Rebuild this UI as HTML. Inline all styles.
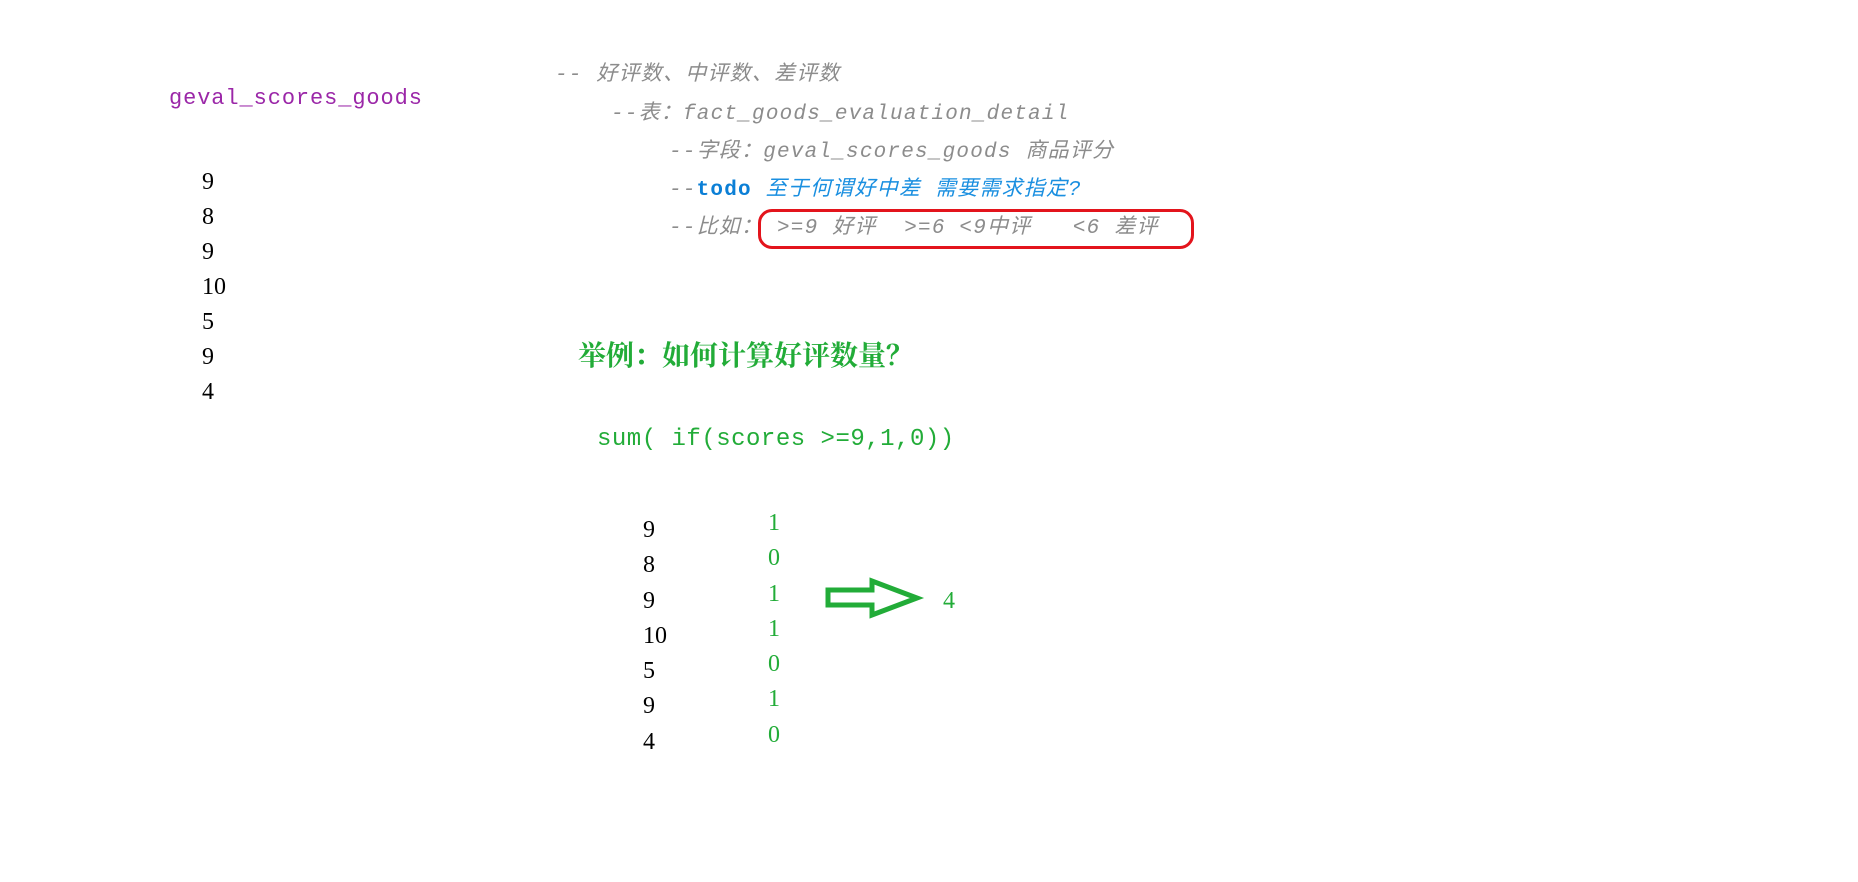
<!DOCTYPE html>
<html><head><meta charset="utf-8"><style>
html,body{margin:0;padding:0;background:#fff;width:1858px;height:882px;overflow:hidden;position:relative}
.t{position:absolute;white-space:pre;line-height:1}
.c{font-family:"Liberation Mono","Noto Sans CJK SC",monospace;font-style:italic;color:#8c8c8c;font-size:21px;letter-spacing:1.2px}
.n{font-family:"Liberation Serif","Noto Serif CJK SC",serif;font-size:24px;color:#000}
.g{color:#22ac38}
</style></head><body>
<div class="t" style="left:169px;top:88px;font-family:'Liberation Mono',monospace;font-size:22px;letter-spacing:0.9px;color:#9b27a8">geval_scores_goods</div>

<div class="t n" style="left:202px;top:165px;line-height:35px">9<br>8<br>9<br>10<br>5<br>9<br>4</div>

<div class="t c" style="left:555px;top:65px">-- 好评数、中评数、差评数</div>
<div class="t c" style="left:611px;top:104px">--表：fact_goods_evaluation_detail</div>
<div class="t c" style="left:669px;top:142px">--字段：geval_scores_goods 商品评分</div>
<div class="t c" style="left:669px;top:180px">--<span style="color:#0b7fd6;font-style:normal;font-weight:bold">todo</span><span style="color:#1a8fe0"> 至于何谓好中差 需要需求指定?</span></div>
<div class="t c" style="left:669px;top:218px">--比如： &gt;=9 好评  &gt;=6 &lt;9中评   &lt;6 差评</div>
<div style="position:absolute;left:758px;top:209px;width:430px;height:34px;border:3px solid #e3141c;border-radius:14px/14px"></div>

<div class="t g" style="left:578px;top:340px;font-family:'Noto Serif CJK SC','Liberation Serif',serif;font-size:28px;font-weight:bold">举例：如何计算好评数量？</div>
<div class="t g" style="left:597px;top:428px;font-family:'Liberation Mono',monospace;font-size:24px;letter-spacing:0.5px">sum( if(scores &gt;=9,1,0))</div>

<div class="t n" style="left:643px;top:513px;line-height:35.3px">9<br>8<br>9<br>10<br>5<br>9<br>4</div>
<div class="t n g" style="left:768px;top:506px;line-height:35.3px">1<br>0<br>1<br>1<br>0<br>1<br>0</div>

<svg style="position:absolute;left:0;top:0" width="1858" height="882">
<polygon points="828,590 872,590 872,581 917,598 872,615 872,605 828,605" fill="none" stroke="#22ac38" stroke-width="5" stroke-linejoin="miter"/>
</svg>
<div class="t n g" style="left:943px;top:589px">4</div>
</body></html>
